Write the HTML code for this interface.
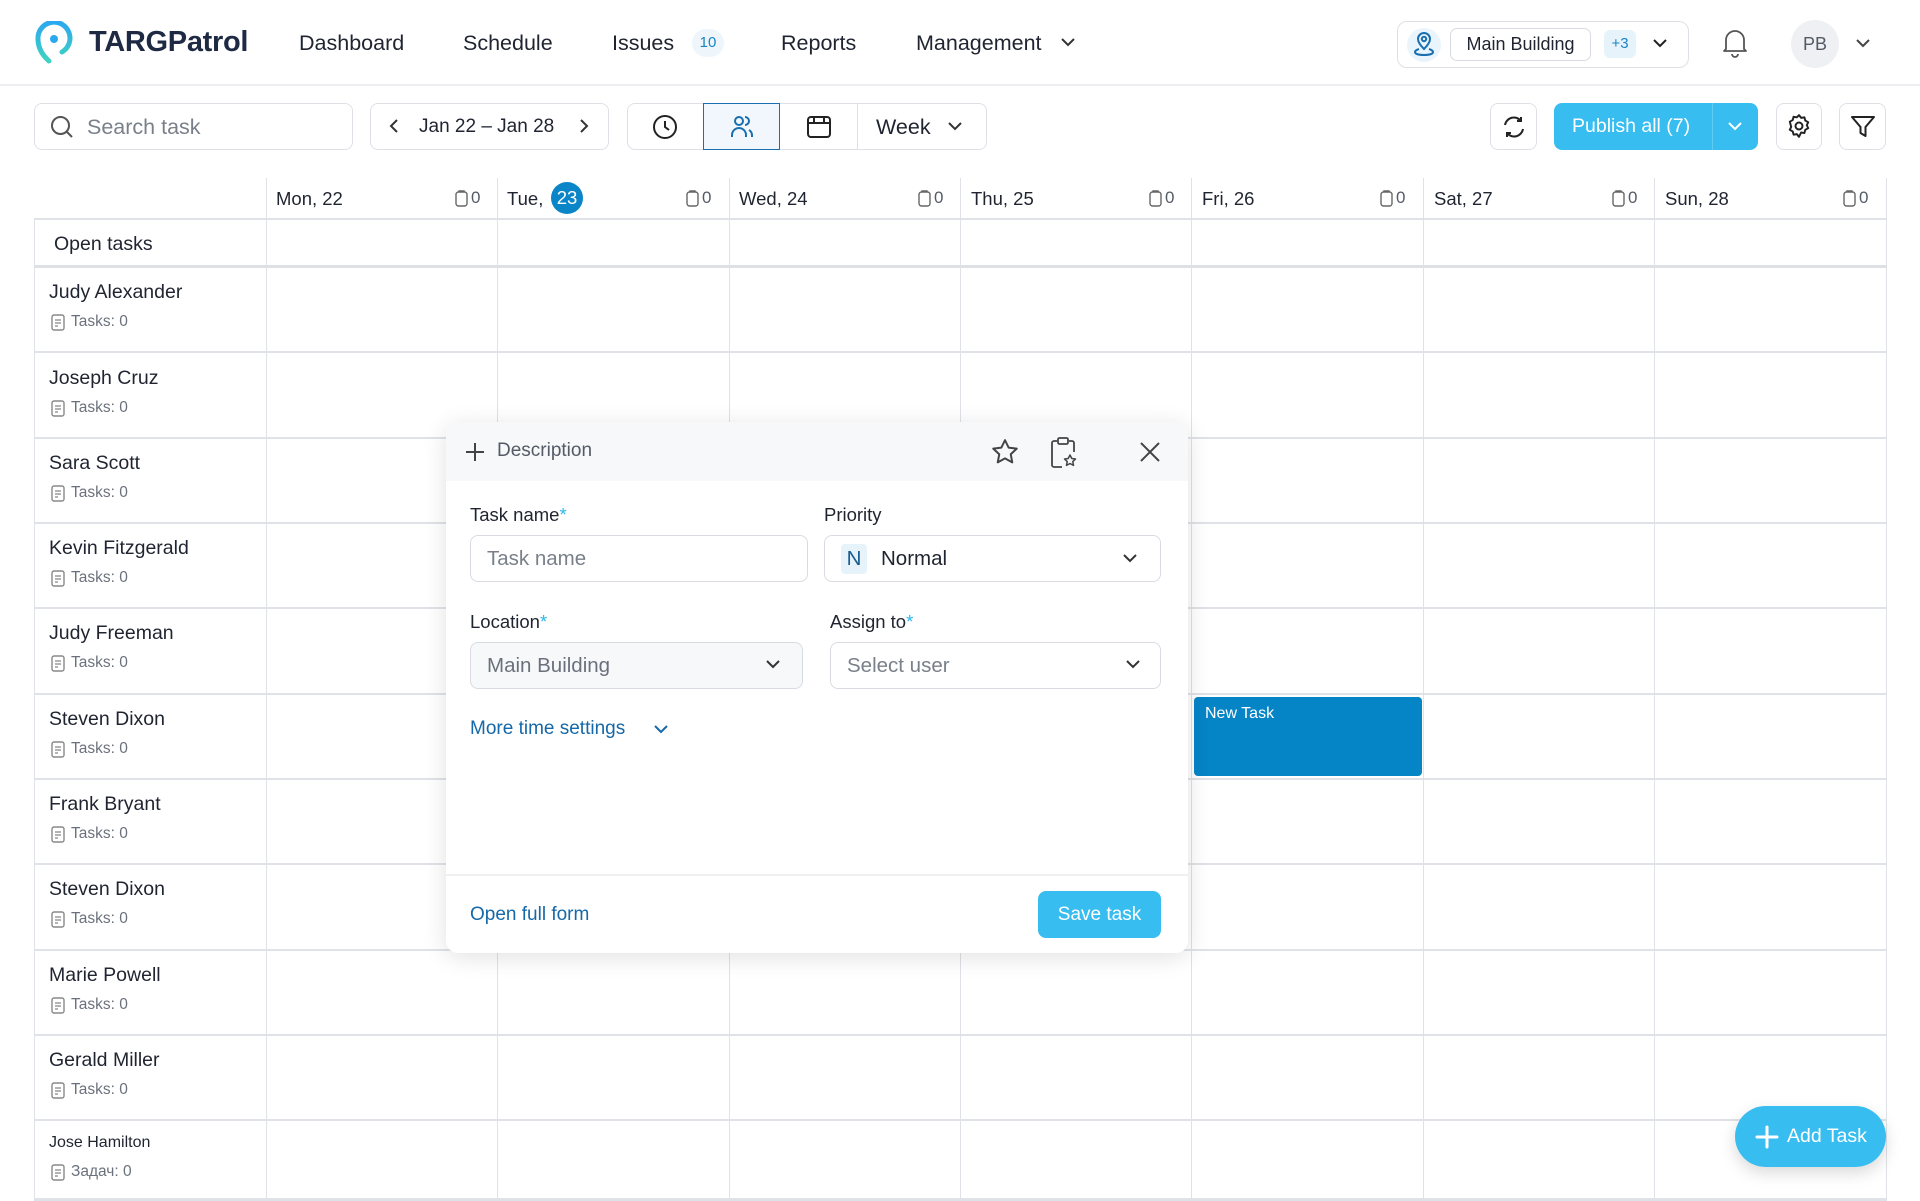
<!DOCTYPE html>
<html><head><meta charset="utf-8">
<style>
*{box-sizing:border-box;margin:0;padding:0}
body{width:1920px;height:1201px;overflow:hidden;background:#fff;font-family:"Liberation Sans","Noto Sans CJK SC",sans-serif;color:#1f2430;position:relative}
.a{position:absolute}
.nav{font-size:21.5px;color:#1f2430;top:31px}
.btn{position:absolute;border:1.5px solid #dde1e6;border-radius:8px;background:#fff}
svg{display:block}
.vl{position:absolute;top:178px;bottom:0;width:1px;background:#dfe2e6}
.hl{position:absolute;left:34px;width:1852px;height:1.5px;background:#dfe2e6}
.day{position:absolute;top:188px;font-size:18.5px;color:#1f2430}
.cnt{position:absolute;top:188px;font-size:17px;color:#555b66;display:flex;align-items:center;gap:3px}
.name{position:absolute;left:49px;font-size:19.5px;color:#1f2430}
.tk{position:absolute;left:51px;font-size:15.5px;color:#6b717c;display:flex;align-items:center;gap:6px}
.lbl{position:absolute;font-size:18.5px;color:#1f2430}
.lbl b{color:#2bb6ee;font-weight:normal}
.inp{position:absolute;border:1.5px solid #d8dce2;border-radius:8px;height:47px;font-size:20.5px;color:#7a808a;display:flex;align-items:center;padding-left:16px}
</style></head><body>
<!-- header -->
<div class="a" style="left:0;top:0;width:1920px;height:86px;border-bottom:2px solid #eceef1"></div>
<svg class="a" style="left:35px;top:21px" width="40" height="46" viewBox="0 0 40 46"><defs><linearGradient id="g" x1="0" y1="0" x2="0" y2="1"><stop offset="0" stop-color="#2aa8f0"/><stop offset="1" stop-color="#3fd3c0"/></linearGradient></defs><path d="M14 40 C6 33 3 25 3 18 A16 16 0 1 1 27 31" fill="none" stroke="url(#g)" stroke-width="5" stroke-linecap="round"/><circle cx="19" cy="18" r="4" fill="#2aa8f0"/></svg>
<div class="a" style="left:89px;top:26px;font-size:29px;font-weight:bold;color:#1e2a44;letter-spacing:-0.3px">TARGPatrol</div>
<div class="a nav" style="left:299px">Dashboard</div>
<div class="a nav" style="left:463px">Schedule</div>
<div class="a nav" style="left:612px">Issues</div>
<div class="a" style="left:692px;top:29px;width:32px;height:28px;border-radius:14px;background:#eef6fc;color:#1a84c4;font-size:15px;text-align:center;line-height:28px">10</div>
<div class="a nav" style="left:781px">Reports</div>
<div class="a nav" style="left:916px">Management</div>
<svg class="a" style="left:1060px;top:37px" width="16" height="10"><path d="M2 2l6 6 6-6" fill="none" stroke="#333" stroke-width="2"/></svg>
<div class="btn" style="left:1397px;top:21px;width:292px;height:47px;border-radius:10px"></div>
<div class="a" style="left:1407px;top:28px;width:34px;height:34px;border-radius:17px;background:#eaf4fc"></div>
<svg class="a" style="left:1413px;top:31px" width="22" height="26" viewBox="0 0 22 26"><path d="M11 18c-4-4-6-7-6-10a6 6 0 0 1 12 0c0 3-2 6-6 10z" fill="none" stroke="#1a6fb0" stroke-width="2"/><circle cx="11" cy="8" r="2.2" fill="none" stroke="#1a6fb0" stroke-width="2"/><path d="M6 18c-3 1-4 2-4 3 0 2 4 3 9 3s9-1 9-3c0-1-1-2-4-3" fill="none" stroke="#1a6fb0" stroke-width="2"/></svg>
<div class="a" style="left:1450px;top:28px;width:141px;height:33px;border:1.5px solid #d8dce2;border-radius:7px;font-size:18px;line-height:30px;text-align:center;color:#1f2430">Main Building</div>
<div class="a" style="left:1604px;top:30px;width:32px;height:28px;border-radius:6px;background:#e6f3fb;color:#1a84c4;font-size:15px;line-height:28px;text-align:center">+3</div>
<svg class="a" style="left:1652px;top:38px" width="16" height="10"><path d="M2 2l6 6 6-6" fill="none" stroke="#222" stroke-width="2"/></svg>
<svg class="a" style="left:1722px;top:28px" width="26" height="30" viewBox="0 0 26 30"><path d="M4 21V12a9 9 0 0 1 18 0v9l2 2H2z" fill="none" stroke="#555" stroke-width="1.8" stroke-linejoin="round"/><path d="M10 26a3 3 0 0 0 6 0" fill="none" stroke="#555" stroke-width="1.8"/></svg>
<div class="a" style="left:1791px;top:20px;width:48px;height:48px;border-radius:24px;background:#eef0f3;color:#555b66;font-size:18px;line-height:48px;text-align:center">PB</div>
<svg class="a" style="left:1855px;top:38px" width="16" height="10"><path d="M2 2l6 6 6-6" fill="none" stroke="#444" stroke-width="2"/></svg>

<!-- toolbar -->
<div class="btn" style="left:34px;top:103px;width:319px;height:47px"></div>
<svg class="a" style="left:50px;top:115px" width="24" height="24"><circle cx="10.5" cy="10.5" r="8.5" fill="none" stroke="#555" stroke-width="2"/><path d="M17 17l5 5" stroke="#555" stroke-width="2"/></svg>
<div class="a" style="left:87px;top:115px;font-size:21.5px;color:#7a808a">Search task</div>
<div class="btn" style="left:370px;top:103px;width:239px;height:47px"></div>
<svg class="a" style="left:389px;top:118px" width="10" height="16"><path d="M8 2l-6 6 6 6" fill="none" stroke="#333" stroke-width="2"/></svg>
<div class="a" style="left:419px;top:116px;font-size:19px">Jan 22 – Jan 28</div>
<svg class="a" style="left:579px;top:118px" width="10" height="16"><path d="M2 2l6 6-6 6" fill="none" stroke="#333" stroke-width="2"/></svg>
<div class="btn" style="left:627px;top:103px;width:360px;height:47px"></div>
<div class="a" style="left:703px;top:103px;width:77px;height:47px;border:1.5px solid #1a6fb0;background:#f1f7fc"></div>
<div class="a" style="left:857px;top:104px;width:1px;height:45px;background:#dde1e6"></div>
<svg class="a" style="left:652px;top:114px" width="26" height="26"><circle cx="13" cy="13" r="11" fill="none" stroke="#222" stroke-width="2"/><path d="M13 7v6l4 3" fill="none" stroke="#222" stroke-width="2"/></svg>
<svg class="a" style="left:729px;top:114px" width="26" height="26"><circle cx="10" cy="7" r="4" fill="none" stroke="#1a6fb0" stroke-width="2"/><path d="M3 23v-2a7 7 0 0 1 14 0v2" fill="none" stroke="#1a6fb0" stroke-width="2"/><path d="M16 3a4 4 0 0 1 0 8M20 16a6 6 0 0 1 3 5v2" fill="none" stroke="#1a6fb0" stroke-width="2"/></svg>
<svg class="a" style="left:806px;top:114px" width="26" height="26"><rect x="2" y="3" width="22" height="20" rx="3" fill="none" stroke="#222" stroke-width="2"/><path d="M2 9h22M8 3v6M18 3v6" stroke="#222" stroke-width="2"/></svg>
<div class="a" style="left:876px;top:115px;font-size:21.5px">Week</div>
<svg class="a" style="left:947px;top:121px" width="16" height="10"><path d="M2 2l6 6 6-6" fill="none" stroke="#333" stroke-width="2"/></svg>

<div class="btn" style="left:1490px;top:103px;width:47px;height:47px"></div>
<svg class="a" style="left:1501px;top:114px" width="26" height="26" viewBox="0 0 26 26"><path d="M4 11a9 9 0 0 1 16-4M22 15a9 9 0 0 1-16 4" fill="none" stroke="#222" stroke-width="2"/><path d="M20 3v4h-4M6 23v-4h4" fill="none" stroke="#222" stroke-width="2"/></svg>
<div class="a" style="left:1554px;top:103px;width:204px;height:47px;border-radius:8px;background:#38bdf0"></div>
<div class="a" style="left:1712px;top:103px;width:1px;height:47px;background:#5ecbf3"></div>
<div class="a" style="left:1572px;top:115px;font-size:19.5px;color:#fff">Publish all (7)</div>
<svg class="a" style="left:1727px;top:121px" width="16" height="10"><path d="M2 2l6 6 6-6" fill="none" stroke="#fff" stroke-width="2"/></svg>
<div class="btn" style="left:1776px;top:103px;width:46px;height:47px"></div>
<svg class="a" style="left:1786px;top:113px" width="26" height="26" viewBox="0 0 24 24"><path d="M12 2l2 2.5 3-.5.8 3 2.7 1.5-1.3 2.8 1.3 2.7-2.7 1.5-.8 3-3-.5L12 22l-2-2.5-3 .5-.8-3-2.7-1.5 1.3-2.7L3.5 8l2.7-1.5.8-3 3 .5z" fill="none" stroke="#222" stroke-width="1.8" stroke-linejoin="round"/><circle cx="12" cy="12" r="3.2" fill="none" stroke="#222" stroke-width="1.8"/></svg>
<div class="btn" style="left:1839px;top:103px;width:47px;height:47px"></div>
<svg class="a" style="left:1850px;top:114px" width="26" height="26"><path d="M2 3h22l-8.5 10v9l-5-3v-6z" fill="none" stroke="#222" stroke-width="2" stroke-linejoin="round"/></svg>

<!-- grid -->
<div class="vl" style="left:266px"></div>
<div class="vl" style="left:497px"></div>
<div class="vl" style="left:729px"></div>
<div class="vl" style="left:960px"></div>
<div class="vl" style="left:1191px"></div>
<div class="vl" style="left:1423px"></div>
<div class="vl" style="left:1654px"></div>
<div class="vl" style="left:1886px"></div>
<div class="a" style="left:34px;top:219px;bottom:0;width:1px;background:#dfe2e6"></div>
<div class="hl" style="top:218px;height:2px"></div>
<div class="hl" style="top:265px;height:3px;background:#dde0e4"></div>
<div class="hl" style="top:351px"></div>
<div class="hl" style="top:437px"></div>
<div class="hl" style="top:522px"></div>
<div class="hl" style="top:607px"></div>
<div class="hl" style="top:693px"></div>
<div class="hl" style="top:778px"></div>
<div class="hl" style="top:863px"></div>
<div class="hl" style="top:949px"></div>
<div class="hl" style="top:1034px"></div>
<div class="hl" style="top:1119px"></div>
<div class="hl" style="top:1198px;height:3px"></div>

<div class="day" style="left:276px">Mon, 22</div>
<div class="day" style="left:507px">Tue,</div>
<div class="a" style="left:551px;top:182px;width:32px;height:32px;border-radius:16px;background:#0a86c8;color:#fff;text-align:center;line-height:32px;font-size:18.5px">23</div>
<div class="day" style="left:739px">Wed, 24</div>
<div class="day" style="left:971px">Thu, 25</div>
<div class="day" style="left:1202px">Fri, 26</div>
<div class="day" style="left:1434px">Sat, 27</div>
<div class="day" style="left:1665px">Sun, 28</div>
<div class="cnt" style="left:455px"><svg width="13" height="17"><rect x="1" y="2" width="11" height="14" rx="2.5" fill="none" stroke="#666" stroke-width="1.4"/><path d="M4 2V1h5v1" fill="none" stroke="#666" stroke-width="1.4"/></svg>0</div>
<div class="cnt" style="left:686px"><svg width="13" height="17"><rect x="1" y="2" width="11" height="14" rx="2.5" fill="none" stroke="#666" stroke-width="1.4"/><path d="M4 2V1h5v1" fill="none" stroke="#666" stroke-width="1.4"/></svg>0</div>
<div class="cnt" style="left:918px"><svg width="13" height="17"><rect x="1" y="2" width="11" height="14" rx="2.5" fill="none" stroke="#666" stroke-width="1.4"/><path d="M4 2V1h5v1" fill="none" stroke="#666" stroke-width="1.4"/></svg>0</div>
<div class="cnt" style="left:1149px"><svg width="13" height="17"><rect x="1" y="2" width="11" height="14" rx="2.5" fill="none" stroke="#666" stroke-width="1.4"/><path d="M4 2V1h5v1" fill="none" stroke="#666" stroke-width="1.4"/></svg>0</div>
<div class="cnt" style="left:1380px"><svg width="13" height="17"><rect x="1" y="2" width="11" height="14" rx="2.5" fill="none" stroke="#666" stroke-width="1.4"/><path d="M4 2V1h5v1" fill="none" stroke="#666" stroke-width="1.4"/></svg>0</div>
<div class="cnt" style="left:1612px"><svg width="13" height="17"><rect x="1" y="2" width="11" height="14" rx="2.5" fill="none" stroke="#666" stroke-width="1.4"/><path d="M4 2V1h5v1" fill="none" stroke="#666" stroke-width="1.4"/></svg>0</div>
<div class="cnt" style="left:1843px"><svg width="13" height="17"><rect x="1" y="2" width="11" height="14" rx="2.5" fill="none" stroke="#666" stroke-width="1.4"/><path d="M4 2V1h5v1" fill="none" stroke="#666" stroke-width="1.4"/></svg>0</div>

<div class="a" style="left:54px;top:233px;font-size:19.5px">Open tasks</div>

<div class="name" style="top:281px">Judy Alexander</div><div class="tk" style="top:313px"><svg width="14" height="17"><rect x="1" y="1" width="12" height="15" rx="2" fill="none" stroke="#888" stroke-width="1.4"/><path d="M4 6h6M4 9h6M4 12h3" stroke="#888" stroke-width="1.3"/></svg>Tasks: 0</div>
<div class="name" style="top:367px">Joseph Cruz</div><div class="tk" style="top:399px"><svg width="14" height="17"><rect x="1" y="1" width="12" height="15" rx="2" fill="none" stroke="#888" stroke-width="1.4"/><path d="M4 6h6M4 9h6M4 12h3" stroke="#888" stroke-width="1.3"/></svg>Tasks: 0</div>
<div class="name" style="top:452px">Sara Scott</div><div class="tk" style="top:484px"><svg width="14" height="17"><rect x="1" y="1" width="12" height="15" rx="2" fill="none" stroke="#888" stroke-width="1.4"/><path d="M4 6h6M4 9h6M4 12h3" stroke="#888" stroke-width="1.3"/></svg>Tasks: 0</div>
<div class="name" style="top:537px">Kevin Fitzgerald</div><div class="tk" style="top:569px"><svg width="14" height="17"><rect x="1" y="1" width="12" height="15" rx="2" fill="none" stroke="#888" stroke-width="1.4"/><path d="M4 6h6M4 9h6M4 12h3" stroke="#888" stroke-width="1.3"/></svg>Tasks: 0</div>
<div class="name" style="top:622px">Judy Freeman</div><div class="tk" style="top:654px"><svg width="14" height="17"><rect x="1" y="1" width="12" height="15" rx="2" fill="none" stroke="#888" stroke-width="1.4"/><path d="M4 6h6M4 9h6M4 12h3" stroke="#888" stroke-width="1.3"/></svg>Tasks: 0</div>
<div class="name" style="top:708px">Steven Dixon</div><div class="tk" style="top:740px"><svg width="14" height="17"><rect x="1" y="1" width="12" height="15" rx="2" fill="none" stroke="#888" stroke-width="1.4"/><path d="M4 6h6M4 9h6M4 12h3" stroke="#888" stroke-width="1.3"/></svg>Tasks: 0</div>
<div class="name" style="top:793px">Frank Bryant</div><div class="tk" style="top:825px"><svg width="14" height="17"><rect x="1" y="1" width="12" height="15" rx="2" fill="none" stroke="#888" stroke-width="1.4"/><path d="M4 6h6M4 9h6M4 12h3" stroke="#888" stroke-width="1.3"/></svg>Tasks: 0</div>
<div class="name" style="top:878px">Steven Dixon</div><div class="tk" style="top:910px"><svg width="14" height="17"><rect x="1" y="1" width="12" height="15" rx="2" fill="none" stroke="#888" stroke-width="1.4"/><path d="M4 6h6M4 9h6M4 12h3" stroke="#888" stroke-width="1.3"/></svg>Tasks: 0</div>
<div class="name" style="top:964px">Marie Powell</div><div class="tk" style="top:996px"><svg width="14" height="17"><rect x="1" y="1" width="12" height="15" rx="2" fill="none" stroke="#888" stroke-width="1.4"/><path d="M4 6h6M4 9h6M4 12h3" stroke="#888" stroke-width="1.3"/></svg>Tasks: 0</div>
<div class="name" style="top:1049px">Gerald Miller</div><div class="tk" style="top:1081px"><svg width="14" height="17"><rect x="1" y="1" width="12" height="15" rx="2" fill="none" stroke="#888" stroke-width="1.4"/><path d="M4 6h6M4 9h6M4 12h3" stroke="#888" stroke-width="1.3"/></svg>Tasks: 0</div>
<div class="name" style="top:1134px;font-size:16px">Jose Hamilton</div><div class="tk" style="top:1163px"><svg width="14" height="17"><rect x="1" y="1" width="12" height="15" rx="2" fill="none" stroke="#888" stroke-width="1.4"/><path d="M4 6h6M4 9h6M4 12h3" stroke="#888" stroke-width="1.3"/></svg>Задач: 0</div>

<!-- new task block -->
<div class="a" style="left:1194px;top:697px;width:228px;height:79px;border-radius:4px;background:#0584c6;color:#fff;font-size:16px;padding:8px 11px">New Task</div>

<!-- popup -->
<div class="a" style="left:446px;top:422px;width:742px;height:531px;border-radius:12px;background:#fff;box-shadow:0 4px 24px rgba(0,0,0,0.12);overflow:hidden">
  <div style="height:59px;background:#f6f8fa"></div>
  <div style="position:absolute;left:0;right:0;top:452px;height:2px;background:#eef0f2"></div>
</div>
<svg class="a" style="left:465px;top:442px" width="20" height="20"><path d="M10 1v18M1 10h18" stroke="#444" stroke-width="2"/></svg>
<div class="a" style="left:497px;top:440px;font-size:19px;color:#555b66">Description</div>
<svg class="a" style="left:990px;top:437px" width="30" height="30" viewBox="0 0 24 24"><path d="M12 2.5l2.9 6 6.5.8-4.8 4.5 1.2 6.5L12 17.1l-5.8 3.2 1.2-6.5-4.8-4.5 6.5-.8z" fill="none" stroke="#444" stroke-width="1.6" stroke-linejoin="round"/></svg>
<svg class="a" style="left:1050px;top:436px" width="28" height="34" viewBox="0 0 28 34"><path d="M7 5H4a2 2 0 0 0-2 2v22a2 2 0 0 0 2 2h8M19 5h3a2 2 0 0 1 2 2v9" fill="none" stroke="#444" stroke-width="1.8"/><rect x="8" y="2" width="10" height="6" rx="1.5" fill="none" stroke="#444" stroke-width="1.8"/><path d="M20 19l1.8 3.5 3.7.5-2.7 2.6.7 3.8-3.5-1.9-3.5 1.9.7-3.8-2.7-2.6 3.7-.5z" fill="none" stroke="#444" stroke-width="1.5" stroke-linejoin="round"/></svg>
<svg class="a" style="left:1139px;top:441px" width="22" height="22"><path d="M2 2l18 18M20 2L2 20" stroke="#444" stroke-width="2"/></svg>

<div class="lbl" style="left:470px;top:504px">Task name<b>*</b></div>
<div class="inp" style="left:470px;top:535px;width:338px">Task name</div>
<div class="lbl" style="left:824px;top:504px">Priority</div>
<div class="inp" style="left:824px;top:535px;width:337px;color:#1f2430"><span style="display:inline-block;width:26px;height:30px;background:#e6f3fb;border-radius:4px;color:#1a5d8f;text-align:center;line-height:30px;margin-right:14px">N</span>Normal</div>
<svg class="a" style="left:1122px;top:553px" width="16" height="10"><path d="M2 2l6 6 6-6" fill="none" stroke="#333" stroke-width="2"/></svg>
<div class="lbl" style="left:470px;top:611px">Location<b>*</b></div>
<div class="inp" style="left:470px;top:642px;width:333px;background:#f6f8fa;color:#6b717c">Main Building</div>
<svg class="a" style="left:765px;top:659px" width="16" height="10"><path d="M2 2l6 6 6-6" fill="none" stroke="#333" stroke-width="2"/></svg>
<div class="lbl" style="left:830px;top:611px">Assign to<b>*</b></div>
<div class="inp" style="left:830px;top:642px;width:331px">Select user</div>
<svg class="a" style="left:1125px;top:659px" width="16" height="10"><path d="M2 2l6 6 6-6" fill="none" stroke="#333" stroke-width="2"/></svg>
<div class="a" style="left:470px;top:718px;font-size:19px;color:#1668a8">More time settings</div>
<svg class="a" style="left:653px;top:724px" width="16" height="10"><path d="M2 2l6 6 6-6" fill="none" stroke="#1668a8" stroke-width="2"/></svg>
<div class="a" style="left:470px;top:904px;font-size:19px;color:#1668a8">Open full form</div>
<div class="a" style="left:1038px;top:891px;width:123px;height:47px;border-radius:8px;background:#38bdf0;color:#fff;font-size:19px;text-align:center;line-height:47px">Save task</div>

<!-- add task -->
<div class="a" style="left:1735px;top:1106px;width:151px;height:61px;border-radius:31px;background:#38bdf0;box-shadow:0 6px 16px rgba(0,0,0,0.15)"></div>
<svg class="a" style="left:1755px;top:1125px" width="24" height="24"><path d="M12 2v20M2 12h20" stroke="#fff" stroke-width="3" stroke-linecap="round"/></svg>
<div class="a" style="left:1787px;top:1125px;font-size:19.5px;color:#fff">Add Task</div>
</body></html>
